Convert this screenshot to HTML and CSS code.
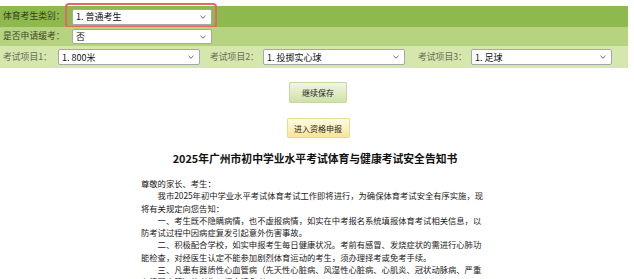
FILE: index.html
```html
<!DOCTYPE html>
<html lang="zh-CN">
<head>
<meta charset="utf-8">
<title>体育考试报名</title>
<link rel="stylesheet" href="styles.css">
</head>
<body>
<div class="form">
  <div class="row row1">
    <span class="label label-wide">体育考生类别：</span>
    <div class="select sel-main"><span>1. 普通考生</span><svg class="chev" viewBox="0 0 6 4"><path d="M0.5 0.8 L3 3.2 L5.5 0.8" /></svg></div>
    <div class="highlight"></div>
  </div>
  <div class="row row2">
    <span class="label label-wide">是否申请缓考：</span>
    <div class="select sel-main sel-short"><span>否</span><svg class="chev" viewBox="0 0 6 4"><path d="M0.5 0.8 L3 3.2 L5.5 0.8" /></svg></div>
  </div>
  <div class="row row3">
    <span class="label label-item first">考试项目1：</span>
    <div class="select sel-item"><span>1. 800米</span><svg class="chev" viewBox="0 0 6 4"><path d="M0.5 0.8 L3 3.2 L5.5 0.8" /></svg></div>
    <span class="label label-item second">考试项目2：</span>
    <div class="select sel-item"><span>1. 投掷实心球</span><svg class="chev" viewBox="0 0 6 4"><path d="M0.5 0.8 L3 3.2 L5.5 0.8" /></svg></div>
    <span class="label label-item third">考试项目3：</span>
    <div class="select sel-item sel-last"><span>1. 足球</span><svg class="chev" viewBox="0 0 6 4"><path d="M0.5 0.8 L3 3.2 L5.5 0.8" /></svg></div>
  </div>
</div>

<div class="actions">
  <button class="btn btn-green">继续保存</button>
  <button class="btn btn-yellow">进入资格申报</button>
</div>

<div class="notice">
  <h1 class="notice-title">2025年广州市初中学业水平考试体育与健康考试安全告知书</h1>
  <div class="notice-body">
    <p class="greet">尊敬的家长、考生：</p>
    <p>我市2025年初中学业水平考试体育考试工作即将进行，为确保体育考试安全有序实施，现将有关规定向您告知：</p>
    <p>一、考生既不隐瞒病情，也不虚报病情，如实在中考报名系统填报体育考试相关信息，以防考试过程中因病症复发引起意外伤害事故。</p>
    <p>二、积极配合学校，如实申报考生每日健康状况。考前有感冒、发烧症状的需进行心肺功能检查，对经医生认定不能参加剧烈体育运动的考生，须办理择考或免考手续。</p>
    <p>三、凡患有器质性心血管病（先天性心脏病、风湿性心脏病、心肌炎、冠状动脉病、严重心律不齐等）的考生，须申请免考。</p>
  </div>
</div>
</body>
</html>
```

FILE: styles.css
```css
html, body {
  margin: 0;
  padding: 0;
  background: #ffffff;
}

body {
  font-family: "Noto Sans CJK SC", "Noto Sans", sans-serif;
  color: #222;
  overflow: hidden;
}

.form {
  margin-top: 6px;
  width: 628px;
}

.row {
  position: relative;
  display: flex;
  align-items: center;
  padding-left: 3px;
  box-sizing: border-box;
}

.row1 {
  height: 21px;
  background: #8db94f;
}

.row2 {
  height: 19px;
  background: #b6d37f;
}

.row3 {
  height: 22px;
  background: #d5e7ac;
}

.label {
  font-size: 8.8px;
  line-height: 1;
  white-space: nowrap;
}

.label-wide {
  width: 69px;
  color: #34401f;
}

.row2 .label-wide {
  color: #3f4a2c;
}

.label-item {
  color: #666d5a;
  width: 55px;
}

.label-item.second {
  margin-left: 10px;
  width: 53px;
}

.label-item.third {
  margin-left: 13px;
  width: 53px;
}

.select {
  display: flex;
  align-items: center;
  justify-content: space-between;
  box-sizing: border-box;
  background: #ffffff;
  border: 1px solid #a7a7a7;
  border-radius: 2px;
  padding: 0 5px 0 3px;
  font-size: 9px;
  color: #111;
  line-height: 1;
}

.sel-main {
  width: 140px;
  height: 16px;
}

.sel-short {
  height: 15px;
}

.sel-item {
  width: 142px;
  height: 16px;
}

.sel-last {
  width: 141px;
}

.chev {
  width: 6px;
  height: 4px;
  fill: none;
  stroke: #555;
  stroke-width: 0.9;
}

.highlight {
  position: absolute;
  left: 65px;
  top: -3px;
  width: 152px;
  height: 25px;
  box-sizing: border-box;
  border: 2px solid #e06a66;
  border-radius: 4px;
}

.actions {
  display: flex;
  flex-direction: column;
  align-items: center;
  gap: 15px;
  margin-top: 14px;
  padding-left: 2px;
}

.btn {
  font-family: "Noto Sans CJK SC", sans-serif;
  font-size: 8px;
  color: #222;
  border-radius: 1px;
  padding: 0;
  height: 20px;
  cursor: pointer;
}

.btn-green {
  width: 58px;
  height: 21px;
  background: linear-gradient(#f0f6e2, #cfe2a6);
  border: 1px solid #c5d8a0;
}

.btn-yellow {
  width: 63px;
  background: linear-gradient(#fffbe0, #f7e59a);
  border: 1px solid #eadb98;
}

.notice {
  width: 342px;
  margin-left: 141px;
}

.notice-title {
  margin: 12px 0 0;
  font-size: 10.8px;
  font-weight: bold;
  text-align: center;
  color: #111;
  line-height: 16px;
  white-space: nowrap;
  margin-left: -4px;
  margin-right: -10px;
}

.notice-body {
  margin-top: 11px;
  font-size: 8.3px;
  line-height: 12.3px;
  color: #1a1a1a;
}

.notice-body p {
  margin: 0;
  text-indent: 2em;
}

.notice-body p.greet {
  text-indent: 0;
}
```
